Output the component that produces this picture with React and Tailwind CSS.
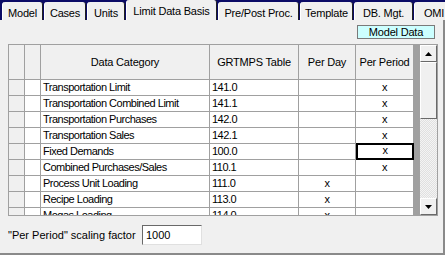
import React from 'react';

const tabs = [
  { label: 'Model', w: 'w-[41px]' },
  { label: 'Cases', w: 'w-[42px]' },
  { label: 'Units', w: 'w-[38px]' },
  { label: 'Limit Data Basis', w: 'w-[91px]', active: true },
  { label: 'Pre/Post Proc.', w: 'w-[81px]' },
  { label: 'Template', w: 'w-[53px]' },
  { label: 'DB. Mgt.', w: 'w-[59px]' },
  { label: 'OMI', w: 'w-[40px]' },
];

const rows = [
  ['Transportation Limit', '141.0', '', 'x'],
  ['Transportation Combined Limit', '141.1', '', 'x'],
  ['Transportation Purchases', '142.0', '', 'x'],
  ['Transportation Sales', '142.1', '', 'x'],
  ['Fixed Demands', '100.0', '', 'x', true],
  ['Combined Purchases/Sales', '110.1', '', 'x'],
  ['Process Unit Loading', '111.0', 'x', ''],
  ['Recipe Loading', '113.0', 'x', ''],
  ['Mogas Loading', '114.0', 'x', ''],
];

function Tab({ label, w, active }) {
  return (
    <div
      className={`${w} shrink-0 bg-[#f0f0f0] rounded-t-[3px] border-r border-r-[#202020] border-l border-l-white flex items-start justify-center whitespace-nowrap overflow-hidden tracking-[-0.2px] ${
        active ? 'h-[20px] pt-[3px]' : 'h-[18px] pt-[3px]'
      }`}
    >
      {label}
    </div>
  );
}

function ScrollButton({ down }) {
  return (
    <div className="h-[17px] w-[17px] bg-[#f0f0f0] border-t border-l border-t-white border-l-white border-r border-b border-r-[#696969] border-b-[#696969] flex items-center justify-center">
      <svg width="7" height="4" viewBox="0 0 7 4">
        {down ? <path d="M0 0h7L3.5 4z" fill="#000" /> : <path d="M0 4h7L3.5 0z" fill="#000" />}
      </svg>
    </div>
  );
}

export default function App() {
  return (
    <div
      className="w-[445px] h-[255px] bg-[#0b0b66] text-[11px] text-black tracking-[-0.5px] overflow-hidden"
      style={{ fontFamily: '"Liberation Sans", Arial, sans-serif' }}
    >
      <div className="h-[20px] flex items-end gap-[1px] pl-[2px]">
        {tabs.map((t) => (
          <Tab key={t.label} {...t} />
        ))}
      </div>

      <div className="h-[235px] bg-[#f0f0f0] border-b-2 border-b-[#8a8a8a] border-r-2 border-r-[#8a8a8a] flex flex-col">
        <div className="flex justify-end pt-[5px] pr-[8px]">
          <div className="w-[78px] h-[14px] bg-[#ccffff] border border-[#7a7a7a] flex items-center justify-center leading-none tracking-[-0.2px]">
            Model Data
          </div>
        </div>

        <div className="mt-[5px] ml-[8px] w-[430px] h-[172px] border border-[#a0a0a0] flex overflow-hidden">
          <div className="w-[405px] flex flex-col bg-white">
            <div className="h-[35px] shrink-0 flex bg-[#f0f0f0] border-b border-[#a0a0a0] tracking-[-0.2px]">
              <div className="w-[16px] border-r border-[#a0a0a0]" />
              <div className="w-[16px] border-r border-[#a0a0a0]" />
              <div className="w-[169px] border-r border-[#a0a0a0] flex items-center justify-center">Data Category</div>
              <div className="w-[89px] border-r border-[#a0a0a0] flex items-center justify-center">GRTMPS Table</div>
              <div className="w-[57px] border-r border-[#a0a0a0] flex items-center justify-center">Per Day</div>
              <div className="w-[58px] border-r border-[#a0a0a0] flex items-center justify-center">Per Period</div>
            </div>
            {rows.map(([name, table, day, period, selected]) => (
              <div key={name} className="h-[16px] shrink-0 flex border-b border-[#a0a0a0] leading-[15px]">
                <div className="w-[16px] bg-[#f0f0f0] border-r border-[#a0a0a0]" />
                <div className="w-[16px] border-r border-[#a0a0a0]" />
                <div className="w-[169px] border-r border-[#a0a0a0] pl-[2px] whitespace-nowrap">{name}</div>
                <div className="w-[89px] border-r border-[#a0a0a0] pl-[2px]">{table}</div>
                <div className="w-[57px] border-r border-[#a0a0a0] text-center">{day}</div>
                <div
                  className={`w-[58px] text-center ${
                    selected ? 'border-2 border-black leading-[11px] -mt-[1px] h-[17px]' : 'border-r border-[#a0a0a0]'
                  }`}
                >
                  {period}
                </div>
              </div>
            ))}
          </div>
          <div className="w-[6px] bg-[#a0a0a0]" />
          <div className="w-[17px] flex flex-col bg-[repeating-conic-gradient(#f4f4f4_0%_25%,#e0e0e0_0%_50%)] bg-[length:2px_2px]">
            <ScrollButton />
            <div className="h-[57px] w-[17px] bg-[#f0f0f0] border-t border-l border-t-white border-l-white border-r border-b border-r-[#696969] border-b-[#696969]" />
            <div className="flex-1" />
            <ScrollButton down />
          </div>
        </div>

        <div className="mt-[9px] ml-[8px] flex items-center gap-[5px]">
          <span className="w-[129px] whitespace-nowrap tracking-[0px]">"Per Period" scaling factor</span>
          <div className="w-[60px] h-[20px] bg-white border-t border-l border-t-[#696969] border-l-[#696969] border-r border-b border-r-[#e0e0e0] border-b-[#e0e0e0] pl-[3px] leading-[18px] tracking-[0px]">
            1000
          </div>
        </div>
      </div>
    </div>
  );
}
